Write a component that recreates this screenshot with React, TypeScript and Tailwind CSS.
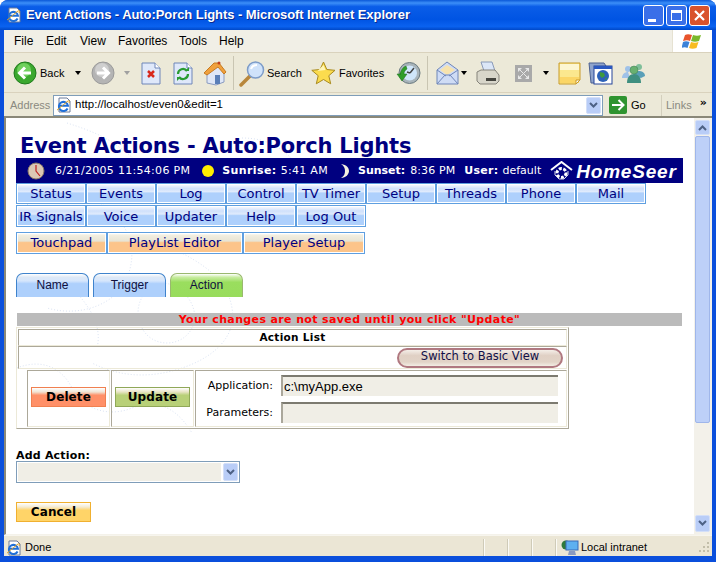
import type { ReactNode } from 'react';

const UI = 'font-["Liberation_Sans",sans-serif]';
const VD = 'font-["DejaVu_Sans",sans-serif]';

function IeIcon({ size = 16 }: { size?: number }) {
  return (
    <svg width={size} height={size} viewBox="0 0 16 16" className="shrink-0">
      <path d="M3 1h8l3 3v11H3z" fill="#fff" stroke="#6b7a99" />
      <path d="M11.600 11.500A4.600 4.600 0 1 1 12 8.800H3.500" fill="none" stroke="#1f6fd8" strokeWidth="2" />
      <path d="M1 13c2-1 8-7 11-9 1.500-.8 1.800.5 1 2" fill="none" stroke="#e0a020" strokeWidth="1" />
    </svg>
  );
}

function ArrowCircle({ muted }: { muted?: boolean }) {
  return (
    <svg width="24" height="24" viewBox="0 0 24 24">
      <circle cx="12" cy="12" r="11" fill={muted ? '#b4b4b4' : '#3ba82e'} stroke={muted ? '#9a9a9a' : '#1f7a1c'} />
      <circle cx="11" cy="9" r="7" fill={muted ? '#cfcfcf' : '#6fd05c'} />
      {muted ? (
        <path d="M6 12h11M12 6.500l5.500 5.500-5.500 5.500" fill="none" stroke="#fff" strokeWidth="3" />
      ) : (
        <path d="M18 12H7M12 6.500L6.500 12l5.500 5.500" fill="none" stroke="#fff" strokeWidth="3" />
      )}
    </svg>
  );
}

function Doc({ children }: { children: ReactNode }) {
  return (
    <svg width="20" height="23" viewBox="0 0 20 23">
      <path d="M1 1h13l5 5v16H1z" fill="#dfe8fa" stroke="#6f86b8" />
      <path d="M14 1v5h5" fill="#fff" stroke="#6f86b8" />
      {children}
    </svg>
  );
}

function Home() {
  return (
    <svg width="24" height="25" viewBox="0 0 24 25">
      <path d="M4 11v11l9 2 8-3V11l-8-8z" fill="#dfe7f7" stroke="#8a9bc0" />
      <path d="M1 12L11 2h5l7 9-2 2-6-7-11 8z" fill="#f0a13c" stroke="#c67a22" />
      <rect x="12" y="14" width="5" height="9" fill="#5a7fb8" />
      <circle cx="16" cy="2" r="1.500" fill="#c04020" />
    </svg>
  );
}

function SearchIcon() {
  return (
    <svg width="27" height="27" viewBox="0 0 27 27">
      <path d="M2 25l9-9" stroke="#b8873c" strokeWidth="3.500" strokeLinecap="round" />
      <circle cx="16.500" cy="10" r="8" fill="#cfe2fa" stroke="#7d9cc8" strokeWidth="1.500" />
      <path d="M12 9c1-3 4-4 6-4" stroke="#fff" strokeWidth="2" fill="none" />
    </svg>
  );
}

function Star() {
  return (
    <svg width="25" height="25" viewBox="0 0 25 25">
      <path d="M12.500 1l3.300 7.500 8.200.8-6.200 5.400 1.900 8.100-7.200-4.300-7.200 4.300 1.900-8.100L.8 9.300 9 8.500z" fill="#fbdc4e" stroke="#a88a20" />
      <path d="M12.500 4l2 5-8 1z" fill="#fff6b8" />
    </svg>
  );
}

function History() {
  return (
    <svg width="25" height="25" viewBox="0 0 25 25">
      <circle cx="13.500" cy="12" r="10.500" fill="#a8b4ba" stroke="#6a7a80" />
      <circle cx="13.500" cy="12" r="7.500" fill="#cfe6fa" />
      <path d="M14 12l4-5M14 12l-3-1" stroke="#444" strokeWidth="1.500" />
      <path d="M1 13h4l-1 0c1-4 3-7 6-8l1 3c-2 1-3 3-3 5h3l-5 7z" fill="#2f9e2a" stroke="#1c701c" strokeWidth=".5" />
    </svg>
  );
}

function Mail() {
  return (
    <svg width="23" height="24" viewBox="0 0 23 24">
      <path d="M1 9l10-8 11 8v14H1z" fill="#cfdcf5" stroke="#6f86b8" />
      <path d="M4 9l7-5 8 5-8 5z" fill="#f7e3ae" />
      <path d="M1 23l8-9h5l8 9M1 9l9 6M22 9l-9 6" fill="none" stroke="#6f86b8" />
    </svg>
  );
}

function Printer() {
  return (
    <svg width="24" height="24" viewBox="0 0 24 24">
      <path d="M5 1h11l3 9H8z" fill="#dbe6f7" stroke="#8a9ab8" />
      <path d="M1 11l4-2h14l4 5v6l-3 3H4l-3-3z" fill="#d8d6ca" stroke="#85837a" />
      <rect x="10" y="17" width="10" height="3" fill="#45453f" />
    </svg>
  );
}

function FullScreen() {
  return (
    <svg width="17" height="17" viewBox="0 0 17 17">
      <rect width="17" height="17" fill="#a9a9a9" />
      <path d="M3 3h4L3 7zM14 3v4l-4-4zM3 14v-4l4 4zM14 14h-4l4-4z" fill="#e8e8e8" />
      <path d="M5 5l7 7M12 5l-7 7" stroke="#e8e8e8" />
    </svg>
  );
}

function Note() {
  return (
    <svg width="23" height="23" viewBox="0 0 23 23">
      <path d="M1 1h21v17l-4 4H1z" fill="#fbe88e" stroke="#c89a28" />
      <rect x="2" y="2" width="19" height="6" fill="#fdf6d2" />
      <rect x="2" y="15" width="19" height="6" fill="#fbd666" />
      <path d="M18 22v-4h4z" fill="#fff" stroke="#c89a28" />
    </svg>
  );
}

function Globe() {
  return (
    <svg width="25" height="23" viewBox="0 0 25 23">
      <path d="M1 1h15l2 3v17H3z" fill="#8fa4cc" stroke="#4c6090" />
      <rect x="6" y="4" width="18" height="18" fill="#fff" stroke="#24459a" />
      <rect x="6" y="4" width="18" height="3" fill="#2a58c0" />
      <circle cx="15" cy="14" r="6" fill="#2d62b8" />
      <path d="M12 10l4 1 1 3-3 2-2-2zM18 15l1 2-2 1z" fill="#3f9a3c" />
    </svg>
  );
}

function Messenger() {
  return (
    <svg width="25" height="22" viewBox="0 0 25 22">
      <circle cx="7" cy="7" r="3" fill="#9fc2e8" />
      <path d="M1 16c0-4 3-6 6-6l2 6z" fill="#9fc2e8" />
      <circle cx="18" cy="5" r="3" fill="#7fbf9a" />
      <path d="M13 14c0-4 3-5 5-5s6 1 6 5l-4 2z" fill="#5a9fb8" />
      <circle cx="13" cy="8" r="4" fill="#68b070" stroke="#3f7f58" strokeWidth=".5" />
      <path d="M6 21c0-6 3-9 7-9s7 3 7 9z" fill="#3f8f80" />
    </svg>
  );
}

function Caret({ className = '' }: { className?: string }) {
  return <span className={`w-0 h-0 border-x-[3.500px] border-x-transparent border-t-[4px] border-t-black ${className}`} />;
}

function Chevron() {
  return (
    <svg width="9" height="7" viewBox="0 0 9 7">
      <path d="M1 1l3.500 3.500L8 1" fill="none" stroke="#4d6185" strokeWidth="2" />
    </svg>
  );
}

function DropBtn({ className = '' }: { className?: string }) {
  return (
    <div className={`w-[15px] flex items-center justify-center rounded-[2px] border border-[#d3dff8] bg-[#b9cdf7] ${className}`}>
      <Chevron />
    </div>
  );
}

function TitleBar() {
  return (
    <div className="h-[30px] shrink-0 flex items-center pl-[6px] pr-[6px] rounded-t-[8px] bg-[linear-gradient(180deg,#0a58d8_0%,#3c8ff8_10%,#0a5de8_22%,#0054e3_65%,#0a62f0_88%,#0048c8_100%)]">
      <IeIcon />
      <span className={`ml-[4px] ${UI} text-[13px] font-bold tracking-[-0.07px] text-white whitespace-nowrap [text-shadow:1px_1px_0_#0a2a90]`}>
        Event Actions - Auto:Porch Lights - Microsoft Internet Explorer
      </span>
      <div className="ml-auto flex gap-[2px]">
        <div className="w-[21px] h-[21px] rounded-[3px] border border-white bg-[#3a6fe8] relative">
          <div className="absolute left-[4px] bottom-[3px] w-[8px] h-[3px] bg-white" />
        </div>
        <div className="w-[21px] h-[21px] rounded-[3px] border border-white bg-[#3a6fe8] p-[4px]">
          <div className="w-full h-full border border-white border-t-[3px]" />
        </div>
        <div className="w-[21px] h-[21px] rounded-[3px] border border-white bg-[#d9532c] flex items-center justify-center">
          <svg width="13" height="13" viewBox="0 0 13 13">
            <path d="M2 2l9 9M11 2l-9 9" stroke="#fff" strokeWidth="2.200" />
          </svg>
        </div>
      </div>
    </div>
  );
}

function MenuBar() {
  const items: [string, string][] = [
    ['File', 'w-[32px]'], ['Edit', 'w-[34px]'], ['View', 'w-[38px]'],
    ['Favorites', 'w-[61px]'], ['Tools', 'w-[40px]'], ['Help', 'w-[40px]'],
  ];
  return (
    <div className="h-[23px] shrink-0 flex items-stretch bg-[#f1efe6] border-b border-[#d9d2bd]">
      <div className={`flex-1 flex items-center pl-[10px] ${UI} text-[12px] text-black`}>
        {items.map(([t, w]) => <span key={t} className={w}>{t}</span>)}
      </div>
      <div className="w-[40px] bg-white flex items-center justify-center border-l border-[#e6e2d2]">
        <svg width="22" height="19" viewBox="0 0 22 19">
          <path d="M3 3c2-1 4-1 7 0l-2 6c-2-1-4-1-7 0z" fill="#e8542c" />
          <path d="M11 3c3 1 5 1 8 0l-2 6c-3 1-5 1-8 0z" fill="#7ab82c" />
          <path d="M1 10c2-1 4-1 6.500 0l-2 6c-2-1-4-1-6 0z" fill="#3c82d8" />
          <path d="M9 10c3 1 5 1 7.500 0l-2 6c-3 1-5 1-7.500 0z" fill="#f8bc20" />
        </svg>
      </div>
    </div>
  );
}

function ToolBar() {
  return (
    <div className={`h-[40px] shrink-0 flex items-center pl-[9px] pt-[1px] bg-[#ece9d8] border-b border-[#d9d2bd] ${UI} text-[11px] text-black`}>
      <ArrowCircle />
      <span className="ml-[3px] w-[32px]">Back</span>
      <Caret className="ml-[3px]" />
      <span className="ml-[10px]"><ArrowCircle muted /></span>
      <Caret className="ml-[9px] !border-t-[#a0a0a0]" />
      <span className="ml-[11px]">
        <Doc><path d="M7 9l6 6M13 9l-6 6" stroke="#d8281c" strokeWidth="2.500" /></Doc>
      </span>
      <span className="ml-[12px]">
        <Doc>
          <path d="M5 12a5 5 0 0 1 9-3" fill="none" stroke="#2a9c32" strokeWidth="2.200" />
          <path d="M15 12a5 5 0 0 1-9 3" fill="none" stroke="#2a9c32" strokeWidth="2.200" />
          <path d="M12 9h4V5zM8 15H4v4z" fill="#2a9c32" />
        </Doc>
      </span>
      <span className="ml-[10px]"><Home /></span>
      <div className="ml-[6px] w-px h-[34px] bg-[#c9c5b2]" />
      <span className="ml-[5px]"><SearchIcon /></span>
      <span className="ml-[1px] w-[44px]">Search</span>
      <Star />
      <span className="ml-[3px] w-[57px]">Favorites</span>
      <History />
      <div className="ml-[6px] w-px h-[34px] bg-[#c9c5b2]" />
      <span className="ml-[8px]"><Mail /></span>
      <Caret className="ml-[2px]" />
      <span className="ml-[9px]"><Printer /></span>
      <span className="ml-[15px]"><FullScreen /></span>
      <Caret className="ml-[11px]" />
      <span className="ml-[9px]"><Note /></span>
      <span className="ml-[7px]"><Globe /></span>
      <span className="ml-[8px]"><Messenger /></span>
    </div>
  );
}

function AddressBar() {
  return (
    <div className={`h-[23px] shrink-0 flex items-center pt-[1px] bg-[#ece9d8] ${UI} text-[12px]`}>
      <span className="ml-[6px] w-[43px] text-[11px] text-[#8a8a80]">Address</span>
      <div className="w-[550px] h-[21px] flex items-center bg-white border border-[#7f9db9] pl-[2px] pr-px">
        <IeIcon />
        <span className="ml-[3px] text-[11.500px] text-black flex-1">http://localhost/even0&amp;edit=1</span>
        <DropBtn className="h-[17px]" />
      </div>
      <div className="ml-[6px] w-[18px] h-[18px] bg-[#2f9430] rounded-[2px] flex items-center justify-center">
        <svg width="14" height="12" viewBox="0 0 14 12">
          <path d="M1 6h11M7.500 1l5 5-5 5" fill="none" stroke="#fff" strokeWidth="2" />
        </svg>
      </div>
      <span className="ml-[4px] w-[30px] text-black text-[11px]">Go</span>
      <div className="w-px h-[21px] bg-[#d3cfbd]" />
      <span className="ml-[4px] text-[11px] text-[#8a8a80]">Links</span>
      <span className={`ml-[8px] -mt-[6px] ${VD} text-[11px] font-bold leading-none text-black`}>»</span>
    </div>
  );
}

function Watermark() {
  return (
    <svg width="340" height="320" viewBox="0 0 340 320" className="absolute left-[6px] top-0" fill="none" stroke="#dbe4f4" strokeDasharray="1 2">
      <path d="M55 5c25 8 40 14 60 30s30 36 55 42 50-20 80-10" />
      <path d="M10 90c30-20 60-20 85 0s30 45 20 70-45 40-80 30" />
      <path d="M160 130c30 15 55 30 60 60s-20 50-50 60-60 10-90-5" />
      <path d="M5 250c25-10 45 0 55 20s35 30 60 20 45 0 60 25" />
      <path d="M230 20c25 0 45 10 60 35M60 170c20 20 30 40 25 60" />
      <path d="M150 165c-20 5-30 25-20 45s40 20 50 0-10-45-30-45z" />
    </svg>
  );
}

function NavBtn({ label, width = 'w-[70px]', tone = 'blue', height = 'h-[22px]' }: { label: string; width?: string; tone?: 'blue' | 'orange'; height?: string }) {
  const bg = tone === 'blue'
    ? 'bg-[linear-gradient(180deg,#ffffff_0%,#e6eefc_12%,#cfe0fb_25%,#e0ebfc_40%,#aed0fc_48%,#aed0fc_100%)]'
    : 'bg-[linear-gradient(180deg,#ffffff_0%,#f2eee0_12%,#e8e4d4_40%,#fcc48a_48%,#fcc48a_100%)] pb-px';
  return (
    <div className={`${width} ${height} shrink-0 flex items-center justify-center border border-[#5f9fe0] ${bg} shadow-[inset_1px_1px_0_#fff,inset_-1px_-1px_0_#fff] ${VD} text-[13px] leading-none text-[#000080]`}>
      {label}
    </div>
  );
}

function Tab({ label, active }: { label: string; active?: boolean }) {
  return (
    <div className={`w-[73px] h-[24px] pb-px rounded-t-[7px] border border-b-0 flex items-center justify-center ${UI} text-[12px] text-[#101040] ${active ? 'border-[#9ab870] bg-[linear-gradient(180deg,#ffffff_0%,#c8eca0_14%,#9ade5e_36%,#98dc5c_100%)]' : 'border-[#3f83cc] bg-[linear-gradient(180deg,#ffffff_0%,#dde8f6_14%,#d6e6fc_30%,#aed0fc_42%,#aed0fc_100%)]'}`}>
      {label}
    </div>
  );
}

function ActionBtn({ label, width = 'w-[75px]', border, bg }: { label: string; width?: string; border: string; bg: string }) {
  return (
    <div className={`${width} h-[20px] flex items-center justify-center border ${border} ${bg} ${VD} text-[12px] tracking-[.1px] font-bold leading-none text-black`}>
      {label}
    </div>
  );
}

function Field({ label, value }: { label: string; value?: string }) {
  return (
    <div className="flex items-center">
      <span className={`w-[77px] mt-[2px] text-right ${VD} text-[11px] text-black`}>{label}</span>
      <div className={`ml-[8px] w-[277px] h-[21px] bg-[#f0eee6] border-t-2 border-l-2 border-t-[#7c7a70] border-l-[#aaa79b] pl-px flex items-center ${UI} text-[13px] text-black`}>
        {value}
      </div>
    </div>
  );
}

function ActionTable() {
  return (
    <div className="mt-px ml-px w-[553px] h-[102px] p-px border border-[#ece9d8] border-r-[#aca899] border-b-[#aca899] border-t-[#ece9d8] flex flex-col">
      <div className={`h-[17px] flex items-center justify-center border border-t-[#aca899] border-l-[#aca899] border-r-[#ece9d8] border-b-[#ece9d8] ${VD} text-[10.500px] font-bold text-black tracking-[.3px]`}>
        Action List
      </div>
      <div className="h-[23px] flex items-center justify-end pr-[3px] border border-t-[#aca899] border-l-[#aca899] border-r-[#ece9d8] border-b-[#ece9d8]">
        <div className={`w-[166px] h-[20px] pb-px rounded-full border-2 border-[#b07880] bg-[linear-gradient(180deg,#f4eee8_0%,#e0d0c4_35%,#e2d3c7_75%,#f2ede4_100%)] flex items-center justify-center ${VD} text-[11.500px] text-[#101048]`}>
          Switch to Basic View
        </div>
      </div>
      <div className="flex-1 mt-px pl-[9px] flex gap-px">
        <div className="w-[83px] flex items-center justify-center pb-[3px] border border-t-[#aca899] border-l-[#aca899] border-r-[#ece9d8] border-b-[#ece9d8]">
          <ActionBtn label="Delete" border="border-[#f08050]" bg="bg-[linear-gradient(180deg,#ffffff_0%,#f0e4d4_22%,#ff9068_40%,#ff9068_100%)]" />
        </div>
        <div className="w-[83px] flex items-center justify-center pb-[3px] border border-t-[#aca899] border-l-[#aca899] border-r-[#ece9d8] border-b-[#ece9d8]">
          <ActionBtn label="Update" border="border-[#90a858]" bg="bg-[linear-gradient(180deg,#ffffff_0%,#e8e4c4_22%,#b8d078_40%,#b8d078_100%)]" />
        </div>
        <div className="flex-1 flex flex-col justify-center gap-[6px] pt-[1px] border border-t-[#aca899] border-l-[#aca899] border-r-[#ece9d8] border-b-[#ece9d8]">
          <Field label="Application:" value="c:\myApp.exe" />
          <Field label="Parameters:" />
        </div>
      </div>
    </div>
  );
}

function PageContent() {
  const row1 = ['Status', 'Events', 'Log', 'Control', 'TV Timer', 'Setup', 'Threads', 'Phone', 'Mail'];
  const row2 = ['IR Signals', 'Voice', 'Updater', 'Help', 'Log Out'];
  return (
    <div className="relative flex-1 min-w-0 pl-[10px] bg-white overflow-hidden">
      <Watermark />
      <div className="relative">
        <div className={`h-[40px] pl-[4px] flex items-end ${VD} text-[21px] leading-[24px] font-bold tracking-[-0.2px] text-[#000080] whitespace-nowrap`}>
          Event Actions - Auto:Porch Lights
        </div>
        <div className={`h-[25px] w-[667px] flex items-center pt-[1px] bg-[#000080] ${VD} text-[11px] text-white whitespace-nowrap`}>
          <svg width="18" height="18" viewBox="0 0 18 18" className="ml-[11px]">
            <circle cx="9" cy="9" r="8" fill="#dcc8b4" stroke="#8a7868" />
            <path d="M9 3v6l4 5" fill="none" stroke="#c02020" strokeWidth="1.200" />
          </svg>
          <span className="ml-[10px] tracking-[.3px]">6/21/2005 11:54:06 PM</span>
          <span className="ml-[12px] w-[12px] h-[12px] rounded-full bg-[#ffee00]" />
          <span className="ml-[8px] font-bold tracking-[.4px]">Sunrise:</span>
          <span className="ml-[4px] tracking-[.3px]">5:41 AM</span>
          <svg width="12" height="16" viewBox="0 0 12 16" className="ml-[11px]">
            <path d="M2 1c6 1 8 4 8 7s-3 7-8 7c3-2 4-4 4-7S5 3 2 1z" fill="#f4f0e0" />
          </svg>
          <span className="ml-[7px] font-bold">Sunset:</span>
          <span className="ml-[5px] tracking-[.1px]">8:36 PM</span>
          <span className="ml-[9px] font-bold tracking-[.3px]">User:</span>
          <span className="ml-[4px]">default</span>
          <svg width="23" height="20" viewBox="0 0 23 20" className="ml-[9px]">
            <path d="M1 9l10.500-8L22 9" fill="none" stroke="#fff" strokeWidth="2" />
            <circle cx="11.500" cy="12" r="4.500" fill="none" stroke="#fff" strokeWidth="3" strokeDasharray="3 1.500" />
            <path d="M5 10v4l4 4h5l4-4v-4" fill="none" stroke="#d8d8e8" />
          </svg>
          <span className="ml-[3px] font-['Liberation_Sans',sans-serif] text-[19px] font-bold italic leading-none tracking-[.8px]">HomeSeer</span>
        </div>
        <div className="flex">{row1.map(l => <NavBtn key={l} label={l} height="h-[21px]" />)}</div>
        <div className="flex mt-px">{row2.map(l => <NavBtn key={l} label={l} />)}</div>
        <div className="flex mt-[5px]">
          <NavBtn label="Touchpad" width="w-[91px]" tone="orange" />
          <NavBtn label="PlayList Editor" width="w-[136px]" tone="orange" />
          <NavBtn label="Player Setup" width="w-[122px]" tone="orange" />
        </div>
        <div className="flex gap-[4px] mt-[19px]">
          <Tab label="Name" />
          <Tab label="Trigger" />
          <Tab label="Action" active />
        </div>
        <div className={`mt-[16px] ml-px w-[665px] h-[13px] pt-[2px] bg-[#bbbbbb] flex items-center justify-center ${VD} text-[11px] font-bold tracking-[.37px] text-[#ff0000] whitespace-nowrap`}>
          Your changes are not saved until you click "Update"
        </div>
        <div className="-ml-px"><ActionTable /></div>
        <div className={`mt-[21px] ${VD} text-[11px] leading-[12px] font-bold tracking-[.2px] text-black`}>Add Action:</div>
        <div className="-mt-px w-[224px] h-[22px] flex border border-[#7f9db9] bg-white p-px">
          <div className="flex-1 bg-[#f0eee6]" />
          <DropBtn className="ml-[2px]" />
        </div>
        <div className="mt-[19px]">
          <ActionBtn label="Cancel" border="border-[#f0b030]" bg="bg-[linear-gradient(180deg,#ffffff_0%,#f4ead0_22%,#ffd468_40%,#ffd468_100%)]" />
        </div>
      </div>
    </div>
  );
}

function ScrollBar() {
  return (
    <div className="w-[18px] shrink-0 flex flex-col pl-px pr-[2px] bg-[#f3f1ea]">
      <div className="h-[15px] mt-[2px] flex items-center justify-center rounded-[2px] border border-[#d3dff8] bg-[#b9cdf7]">
        <span className="rotate-180 flex"><Chevron /></span>
      </div>
      <div className="h-[287px] mt-px rounded-[2px] border border-[#9fb6ea] bg-[#bdd0f8]" />
      <div className="flex-1" />
      <div className="h-[17px] mb-[2px] flex items-center justify-center rounded-[2px] border border-[#d3dff8] bg-[#b9cdf7]">
        <Chevron />
      </div>
    </div>
  );
}

function StatusBar() {
  return (
    <div className={`h-[21px] shrink-0 flex items-center pl-[2px] pt-[3px] bg-[#ebe6d5] border-t border-[#f7f5ee] ${UI} text-[11px] text-black`}>
      <IeIcon />
      <span className="ml-[3px] w-[459px]">Done</span>
      {[0, 1, 2].map(i => <div key={i} className="w-[24px] h-[17px] border-l border-[#fbfaf5] shadow-[-1px_0_0_#cfcbb8]" />)}
      <div className="w-px h-[17px] bg-[#fbfaf5] shadow-[-1px_0_0_#cfcbb8]" />
      <svg width="18" height="18" viewBox="0 0 18 18" className="ml-[4px]">
        <circle cx="5" cy="6" r="4.500" fill="#2f7a3c" />
        <rect x="5" y="2" width="12" height="9" fill="#5db0f0" stroke="#3a6ab8" />
        <path d="M8 12h6l1 4H7z" fill="#8a9ac0" />
      </svg>
      <span className="ml-[2px]">Local intranet</span>
      <svg width="11" height="11" viewBox="0 0 11 11" className="ml-auto mr-[2px]" fill="#c2bea9">
        <rect x="8" y="0" width="2" height="2" /><rect x="4" y="4" width="2" height="2" />
        <rect x="8" y="4" width="2" height="2" /><rect x="0" y="8" width="2" height="2" />
        <rect x="4" y="8" width="2" height="2" /><rect x="8" y="8" width="2" height="2" />
      </svg>
    </div>
  );
}

export default function App() {
  return (
    <div className="w-[716px] h-[562px] bg-white overflow-hidden">
      <div className="w-full h-full flex flex-col rounded-t-[8px] bg-[#0a4fdc]">
        <TitleBar />
        <div className="flex-1 min-h-0 mx-[4px] mb-[6px] flex flex-col bg-[#ece9d8]">
          <MenuBar />
          <ToolBar />
          <AddressBar />
          <div className="flex-1 min-h-0 flex border-t-2 border-l-2 border-t-[#8a8878] border-l-[#8a8878] border-b border-b-[#f4f2ea]">
            <PageContent />
            <ScrollBar />
          </div>
          <StatusBar />
        </div>
      </div>
    </div>
  );
}
